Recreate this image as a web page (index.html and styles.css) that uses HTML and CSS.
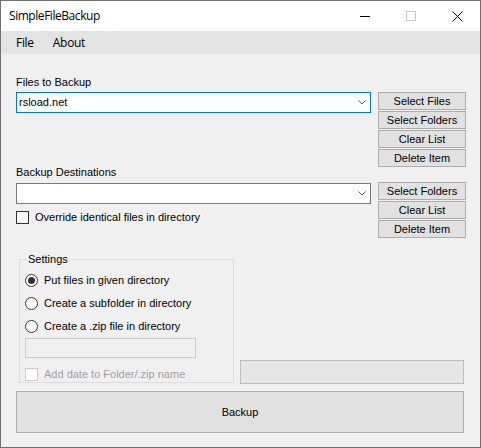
FILE: index.html
```html
<!DOCTYPE html>
<html lang="en">
<head>
    <meta charset="UTF-8">
    <title>SimpleFileBackup</title>
    <link rel="stylesheet" href="styles.css">
</head>
<body>
    <div class="window">
        <!-- Title bar -->
        <header class="titlebar">
            <span class="title">SimpleFileBackup</span>
            <div class="caption">
                <div class="cap-btn">
                    <svg width="10" height="10" viewBox="0 0 10 10"><path d="M0 5.5h10" stroke="#000" stroke-width="1"/></svg>
                </div>
                <div class="cap-btn">
                    <svg width="10" height="10" viewBox="0 0 10 10"><rect x="0.5" y="0.5" width="9" height="9" fill="none" stroke="#cccccc" stroke-width="1"/></svg>
                </div>
                <div class="cap-btn">
                    <svg width="11" height="11" viewBox="0 0 11 11"><path d="M0.5 0.5l10 10M10.5 0.5l-10 10" stroke="#000" stroke-width="1"/></svg>
                </div>
            </div>
        </header>

        <!-- Menu -->
        <nav class="menubar">
            <span class="menu-item">File</span>
            <span class="menu-item">About</span>
        </nav>

        <main class="content">
            <div class="top">
                <div class="left-col">
                    <div class="label">Files to Backup</div>
                    <div class="combo focused">
                        <span class="combo-text">rsload.net</span>
                        <svg class="chevron" width="8" height="5" viewBox="0 0 8 5"><path d="M0.5 0.5l3.5 3.5 3.5-3.5" fill="none" stroke="#606060" stroke-width="1"/></svg>
                    </div>

                    <div class="label label-dest">Backup Destinations</div>
                    <div class="combo">
                        <span class="combo-text"></span>
                        <svg class="chevron" width="8" height="5" viewBox="0 0 8 5"><path d="M0.5 0.5l3.5 3.5 3.5-3.5" fill="none" stroke="#606060" stroke-width="1"/></svg>
                    </div>
                    <div class="check-row override">
                        <span class="checkbox"></span>
                        <span>Override identical files in directory</span>
                    </div>
                </div>

                <div class="right-col">
                    <div class="btn-stack">
                        <button class="btn">Select Files</button>
                        <button class="btn">Select Folders</button>
                        <button class="btn">Clear List</button>
                        <button class="btn">Delete Item</button>
                    </div>
                    <div class="btn-stack dest-btns">
                        <button class="btn">Select Folders</button>
                        <button class="btn">Clear List</button>
                        <button class="btn">Delete Item</button>
                    </div>
                </div>
            </div>

            <div class="bottom">
                <fieldset class="settings">
                    <legend>Settings</legend>
                    <div class="radio-row first">
                        <span class="radio checked"></span>
                        <span>Put files in given directory</span>
                    </div>
                    <div class="radio-row">
                        <span class="radio"></span>
                        <span>Create a subfolder in directory</span>
                    </div>
                    <div class="radio-row">
                        <span class="radio"></span>
                        <span>Create a .zip file in directory</span>
                    </div>
                    <div class="textbox"></div>
                    <div class="check-row disabled">
                        <span class="checkbox"></span>
                        <span>Add date to Folder/.zip name</span>
                    </div>
                </fieldset>
                <div class="progress"></div>
            </div>

            <button class="btn backup">Backup</button>
        </main>
    </div>
</body>
</html>
```

FILE: styles.css
```css
body {
    margin: 0;
    padding: 0;
    background-color: #ffffff;
    font-family: "Liberation Sans", Arial, sans-serif;
    font-size: 11px;
    line-height: 13px;
    color: #000;
}
.window {
    width: 481px;
    height: 448px;
    box-sizing: border-box;
    border: 1px solid #707070;
    background-color: #f0f0f0;
    display: flex;
    flex-direction: column;
}
.titlebar {
    height: 30px;
    background-color: #fff;
    display: flex;
    align-items: center;
    justify-content: space-between;
}
.title {
    font-family: "Open Sans", "Noto Sans", sans-serif;
    font-size: 12px;
    letter-spacing: -0.45px;
    padding-left: 8px;
    padding-bottom: 1px;
}
.caption {
    display: flex;
    height: 30px;
}
.cap-btn {
    width: 46px;
    height: 30px;
    display: flex;
    align-items: center;
    justify-content: center;
}
.menubar {
    height: 23px;
    background-color: #e3e3e3;
    display: flex;
    align-items: center;
    padding-left: 8px;
    font-family: "Open Sans", "Noto Sans", sans-serif;
    font-size: 12px;
    letter-spacing: -0.3px;
}
.menu-item {
    padding: 0 7px;
    margin-right: 5px;
}
.content {
    padding: 22px 0 0 15px;
}
.top {
    display: flex;
    gap: 7px;
}
.left-col {
    width: 355px;
}
.label {
    height: 13px;
}
.label-dest {
    margin-top: 53px;
}
.combo {
    height: 21px;
    box-sizing: border-box;
    border: 1px solid #7a7a7a;
    background-color: #fff;
    margin-top: 3px;
    display: flex;
    align-items: center;
    justify-content: space-between;
    padding: 0 4px 0 2px;
}
.label-dest + .combo {
    margin-top: 4px;
}
.combo.focused {
    border-color: #0078d7;
}
.chevron {
    margin-bottom: 1px;
}
.check-row {
    display: flex;
    align-items: center;
    height: 13px;
}
.override {
    margin-top: 7px;
}
.checkbox {
    width: 13px;
    height: 13px;
    box-sizing: border-box;
    border: 1px solid #333;
    background-color: #fff;
    margin-right: 6px;
}
.right-col {
    width: 88px;
    margin-top: 16px;
}
.dest-btns {
    margin-top: 15px;
}
.btn {
    display: block;
    width: 100%;
    height: 18px;
    margin: 0 0 1px 0;
    padding: 0;
    box-sizing: border-box;
    border: 1px solid #adadad;
    background-color: #e1e1e1;
    font-family: "Liberation Sans", Arial, sans-serif;
    font-size: 11px;
    color: #000;
}
.bottom {
    display: flex;
    align-items: flex-end;
    margin-top: 14px;
}
.settings {
    width: 215px;
    height: 130px;
    box-sizing: border-box;
    margin: 0 0 0 3px;
    padding: 0 0 1px 5px;
    border: 1px solid #dcdcdc;
}
.settings legend {
    padding: 0 2px;
    margin-left: 1px;
    line-height: 13px;
}
.radio-row {
    display: flex;
    align-items: center;
    height: 13px;
    margin-top: 10px;
}
.radio-row.first {
    margin-top: 8px;
}
.radio {
    width: 13px;
    height: 13px;
    box-sizing: border-box;
    border: 1px solid #333;
    border-radius: 50%;
    background-color: #fff;
    margin-right: 6px;
    display: flex;
    align-items: center;
    justify-content: center;
}
.radio.checked::after {
    content: "";
    width: 7px;
    height: 7px;
    border-radius: 50%;
    background-color: #333;
}
.textbox {
    width: 171px;
    height: 20px;
    box-sizing: border-box;
    border: 1px solid #cccccc;
    background-color: #f0f0f0;
    margin-top: 5px;
}
.disabled {
    margin-top: 10px;
    color: #a0a0a0;
}
.disabled .checkbox {
    border-color: #cccccc;
}
.progress {
    width: 224px;
    height: 24px;
    box-sizing: border-box;
    border: 1px solid #bcbcbc;
    background-color: #e6e6e6;
    margin-left: 6px;
    margin-bottom: -1px;
}
.btn.backup {
    width: 448px;
    height: 42px;
    margin-top: 8px;
}
```
